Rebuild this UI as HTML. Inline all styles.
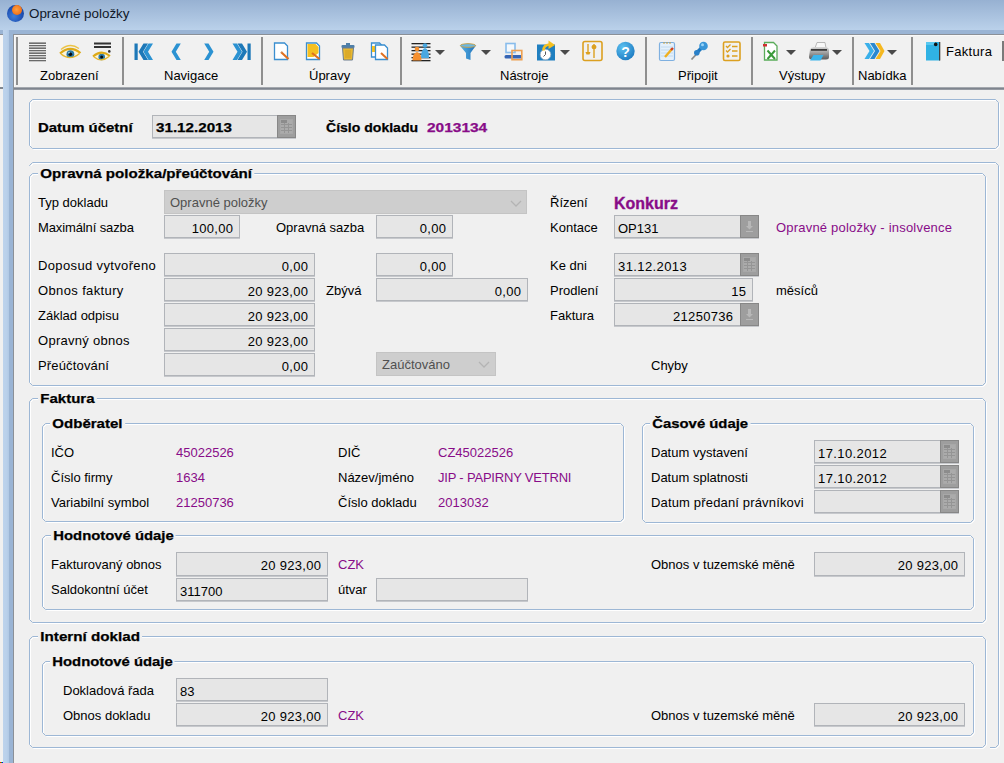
<!DOCTYPE html><html><head><meta charset="utf-8"><style>
*{box-sizing:content-box}
body{margin:0;width:1004px;height:763px;overflow:hidden;background:#f0f0f0;position:relative;font-family:"Liberation Sans",sans-serif;font-size:13px;color:#000}
div{position:absolute}
.t{white-space:nowrap;line-height:15px}
.b{font-weight:bold;transform-origin:0 0;-webkit-text-stroke:0.25px currentColor}
.p{color:#880c88}
.gb{border:1px solid #9cb6d6;border-radius:3px}
.gw{border:1px solid #ffffff;border-radius:3px}
.cap{white-space:nowrap;line-height:15px;font-weight:bold;transform-origin:0 0;-webkit-text-stroke:0.25px #000;background:#f0f0f0;padding:0 2px 0 2px}
.fld{border:1px solid #b1b4b9;background:#e6e6e6;box-shadow:0 1px 0 #c6c8cc}
.cmb{border:1px solid #c4c4c4;background:#cecece}
.btn{border:1px solid #878787;background:#9e9e9e}
.tb{white-space:nowrap;line-height:15px;color:#000}
</style></head><body>

<div style="left:0;top:0;width:1004px;height:30px;background:linear-gradient(#97b1d2,#bad1ea)"></div>
<div style="left:7px;top:5px;width:17px;height:17px;border-radius:50%;background:radial-gradient(circle at 40% 65%,#3f7fd8 0,#1e50b4 55%,#12398a 100%)"></div>
<div style="left:12px;top:5px;width:10px;height:10px;border-radius:50%;background:radial-gradient(circle at 45% 45%,#ffa040 0,#f06a10 80%)"></div>
<div class="t" style="left:29px;top:5.5px;color:#101828;font-size:13.4px">Opravné položky</div>
<div style="left:0;top:30px;width:1004px;height:4px;background:#9ab4d4"></div>
<div style="left:0;top:34px;width:3px;height:1px;background:#8b9097"></div>
<div style="left:0;top:35px;width:3px;height:52px;background:#f6f6f6"></div>
<div style="left:0;top:87px;width:3px;height:2px;background:#80868f"></div>
<div style="left:3px;top:30px;width:6px;height:733px;background:linear-gradient(90deg,#bdd3ec,#b9d0ea 60%,#b0c8e4)"></div>
<div style="left:9px;top:30px;width:4px;height:733px;background:#9ab4d4"></div>
<div style="left:13px;top:34px;width:1px;height:729px;background:#8b9097"></div>
<div style="left:13px;top:34px;width:991px;height:1px;background:#8b9097"></div>
<div style="left:14px;top:35px;width:990px;height:52px;background:#f1f1f1"></div>
<div style="left:14px;top:35px;width:990px;height:1px;background:#f9f9f9"></div>
<div style="left:14px;top:35px;width:1px;height:52px;background:#f9f9f9"></div>
<div style="left:14px;top:87px;width:990px;height:1px;background:#a4a8ae"></div>
<div style="left:14px;top:88px;width:990px;height:1px;background:#7e848e"></div>
<div style="left:14px;top:89px;width:990px;height:1px;background:#959aa2"></div>
<div style="left:0;top:762px;width:1px;height:1px;background:#f00"></div><div style="left:1px;top:762px;width:1px;height:1px;background:#0c0"></div><div style="left:2px;top:762px;width:1px;height:1px;background:#00f"></div>
<div style="left:16px;top:37px;width:2px;height:48px;background:#8f8f8f"></div>
<div style="left:122px;top:37px;width:2px;height:48px;background:#8f8f8f"></div>
<div style="left:261px;top:37px;width:2px;height:48px;background:#8f8f8f"></div>
<div style="left:400px;top:37px;width:2px;height:48px;background:#8f8f8f"></div>
<div style="left:645px;top:37px;width:2px;height:48px;background:#8f8f8f"></div>
<div style="left:751px;top:37px;width:2px;height:48px;background:#8f8f8f"></div>
<div style="left:852px;top:37px;width:2px;height:48px;background:#8f8f8f"></div>
<div style="left:911px;top:37px;width:2px;height:48px;background:#8f8f8f"></div>
<div style="left:1002px;top:41px;width:2px;height:20px;background:#7a7a7a"></div>
<div class="t " style="left:40px;top:67.5px;">Zobrazení</div>
<div class="t " style="left:164px;top:67.5px;">Navigace</div>
<div class="t " style="left:309px;top:67.5px;">Úpravy</div>
<div class="t " style="left:500px;top:67.5px;">Nástroje</div>
<div class="t " style="left:678px;top:67.5px;">Připojit</div>
<div class="t " style="left:779px;top:67.5px;">Výstupy</div>
<div class="t " style="left:858px;top:67.5px;">Nabídka</div>
<div class="t " style="left:946px;top:44px;letter-spacing:0.3px">Faktura</div>
<svg style="position:absolute;left:0;top:0" width="1004" height="70" viewBox="0 0 1004 70"><rect x="29" y="42.5" width="17" height="1.3" fill="#505050"/><rect x="29" y="45.0" width="17" height="1.3" fill="#6a6a6a"/><rect x="29" y="47.5" width="17" height="1.3" fill="#505050"/><rect x="29" y="50.0" width="17" height="1.3" fill="#6a6a6a"/><rect x="29" y="52.5" width="17" height="1.3" fill="#505050"/><rect x="29" y="55.0" width="17" height="1.3" fill="#6a6a6a"/><rect x="29" y="57.5" width="17" height="1.3" fill="#505050"/><rect x="29" y="60.0" width="17" height="1.3" fill="#6a6a6a"/><path d="M60.5 53.5 Q70 45 80 53 Q70 61 60.5 53.5z" fill="#fbf4dc"/><path d="M61 49.5 Q70 42 79 48.5" fill="none" stroke="#ecc448" stroke-width="1.3"/><circle cx="70.4" cy="54.2" r="3.9" fill="#2a7aa8"/><circle cx="70.4" cy="54.2" r="1.8" fill="#0a0a0a"/><circle cx="69" cy="52.8" r="0.8" fill="#bfe6f6"/><path d="M60 53.5 Q70 44.5 80.5 53" fill="none" stroke="#ddaa18" stroke-width="2.2"/><path d="M61 54 Q70 61.5 79.5 53.5" fill="none" stroke="#e6b830" stroke-width="1.4"/><rect x="94" y="42.5" width="17" height="2" fill="#333"/><rect x="94" y="46" width="17" height="2" fill="#333"/><circle cx="109.3" cy="51.4" r="1.3" fill="#333"/><path d="M93.5 56.5 Q101.5 49.5 109.5 56 Q101.5 62.5 93.5 56.5z" fill="#fbf4dc"/><circle cx="101.7" cy="57" r="3.3" fill="#2a7aa8"/><circle cx="101.7" cy="57" r="1.5" fill="#0a0a0a"/><path d="M93 56.5 Q101.5 49 110 56" fill="none" stroke="#ddaa18" stroke-width="2"/><path d="M94 57 Q101.5 63 109 56.5" fill="none" stroke="#e6b830" stroke-width="1.3"/><rect x="134.5" y="43.5" width="3.2" height="16.5" fill="#1d78b8"/><path d="M143.5 43.5h4.5l-5 8.3 5 8.2h-4.5l-5-8.2z" fill="#1d78b8"/><path d="M148.5 43.5h4.5l-5 8.3 5 8.2h-4.5l-5-8.2z" fill="#2b92d2"/><path d="M176.5 43.5h4.3l-5 8.3 5 8.2h-4.3l-5-8.2z" fill="#2b92d2"/><path d="M208.5 43.5h-4.3l5 8.3-5 8.2h4.3l5-8.2z" fill="#2b92d2"/><path d="M237 43.5h-4.5l5 8.3-5 8.2h4.5l5-8.2z" fill="#2b92d2"/><path d="M242 43.5h-4.5l5 8.3-5 8.2h4.5l5-8.2z" fill="#1d78b8"/><rect x="247.5" y="43.5" width="3.2" height="16.5" fill="#1d78b8"/><path d="M274.5 43.0h10l3 3v13.5h-13z" fill="#ffffff" stroke="#3a8ed0" stroke-width="1.3"/><path d="M281 52 L288.5 59" stroke="#e07020" stroke-width="2.2"/><path d="M281 52 l1.5 -0.5 l-0.5 1.5z" fill="#c0a080"/><path d="M306.5 43.0h10l3 3v13.5h-13z" fill="#ffffff" stroke="#3a8ed0" stroke-width="1.3"/><path d="M307.5 44h8l3 3v6l-5 4h-6z" fill="#f5c020"/><path d="M312 53 L319.5 59" stroke="#e07020" stroke-width="2.2"/><rect x="341.5" y="45" width="13" height="3" rx="1" fill="#4f7fa8"/><rect x="346" y="43" width="4" height="2" fill="#4f7fa8"/><path d="M342.5 48h11l-1 12h-9z" fill="#e8b830" stroke="#6f7f8f" stroke-width="1"/><path d="M346 50v8M348 50v8M350 50v8" stroke="#c89820" stroke-width="0.8"/><path d="M371.5 43.0h8l3 3v11h-11z" fill="#ffffff" stroke="#3a8ed0" stroke-width="1.3"/><rect x="372" y="46" width="3" height="6" fill="#f5c020"/><path d="M375.5 45.0h9l3 3v11.5h-12z" fill="#ffffff" stroke="#3a8ed0" stroke-width="1.3"/><path d="M381 53 L387.5 59" stroke="#e07020" stroke-width="2"/><rect x="411.5" y="43" width="19" height="1.3" fill="#222"/><rect x="411.5" y="46.5" width="19" height="1.3" fill="#222"/><rect x="411.5" y="50" width="19" height="1.3" fill="#222"/><rect x="411.5" y="53.5" width="19" height="1.3" fill="#222"/><rect x="411.5" y="57" width="19" height="1.3" fill="#222"/><rect x="411.5" y="60" width="19" height="1.3" fill="#222"/><circle cx="425" cy="45.5" r="2.3" fill="#4aa8e0"/><path d="M421 58 Q421 49 425 48 Q429 49 429 58z" fill="#4aa8e0"/><circle cx="417" cy="49" r="2.3" fill="#f59030"/><path d="M412.5 60.5 Q412.5 53 417 52 Q421.5 53 421.5 60.5z" fill="#f59030"/><path d="M435 50h10l-5 5z" fill="#4a4a4a"/><defs><linearGradient id="fg" x1="0" x2="1"><stop offset="0" stop-color="#5ab4e8"/><stop offset="1" stop-color="#1f70b8"/></linearGradient></defs><path d="M459.8 45.5 Q468 41.5 476 45.5 L470.5 53 V60 L466 58.5 V53z" fill="url(#fg)"/><ellipse cx="468" cy="45.5" rx="7.6" ry="1.8" fill="#6ab8e4" stroke="#d0a040" stroke-width="0.9"/><path d="M481 50h10l-5 5z" fill="#4a4a4a"/><rect x="506" y="43.5" width="9" height="9" fill="#f4f8fc" stroke="#88bcec" stroke-width="1.6"/><rect x="504.5" y="55" width="17.5" height="3.4" rx="1.5" fill="#3565b5"/><rect x="512" y="50.5" width="9.8" height="9.2" fill="none" stroke="#eea050" stroke-width="1.6"/><rect x="537" y="44.5" width="18" height="16" fill="#1f7fc0"/><circle cx="545.5" cy="54.5" r="5.3" fill="#ffffff" stroke="#8fa8bc" stroke-width="0.7"/><path d="M545.5 54.5v-3M545.5 54.5l-2 2" stroke="#444" stroke-width="0.9"/><path d="M543.5 50.5 Q543.5 45 549.5 44.5" fill="none" stroke="#f5c020" stroke-width="2.6"/><path d="M548.5 40.5 L555 45 L548.5 49z" fill="#f5c020"/><path d="M560 50h10l-5 5z" fill="#4a4a4a"/><rect x="583" y="41.5" width="19" height="19" rx="2" fill="none" stroke="#dca020" stroke-width="1.6"/><path d="M588 44v8M594 44v14" stroke="#dca020" stroke-width="1.4"/><path d="M585.5 52h5l-1 2.5h-3z" fill="#dca020"/><ellipse cx="594" cy="47" rx="2.5" ry="2.2" fill="#dca020"/><defs><radialGradient id="hg" cx="0.35" cy="0.3" r="0.8"><stop offset="0" stop-color="#5cc0f0"/><stop offset="1" stop-color="#1a78c0"/></radialGradient></defs><circle cx="625.5" cy="51" r="9.2" fill="url(#hg)"/><text x="625.5" y="57" font-family="Liberation Sans" font-weight="bold" font-size="14" fill="#fff" text-anchor="middle">?</text><rect x="659.5" y="42.5" width="15" height="18" rx="1.5" fill="#e4f0fb" stroke="#7fb0e0" stroke-width="1.2"/><path d="M661 47h12M661 50h12M661 53h12M661 56h12" stroke="#b8d4ee" stroke-width="0.8"/><path d="M664 44v-2M667 44v-2M670 44v-2" stroke="#c8a040" stroke-width="1"/><path d="M665 57 L672 49" stroke="#f0b020" stroke-width="2.4"/><path d="M671 50 L673 48" stroke="#d04020" stroke-width="2.4"/><path d="M691.5 59.5 L698 52.5" stroke="#8a8a8a" stroke-width="1.8"/><path d="M695.5 51.5 L703 44 L705.5 46.5 L698 54z" fill="#1f78c0"/><circle cx="703.5" cy="46" r="4.3" fill="#3a96d8"/><circle cx="696.8" cy="52.8" r="2.8" fill="#2a80c8"/><circle cx="702.5" cy="44.8" r="1.5" fill="#9ad4f8"/><rect x="723.5" y="42" width="16.5" height="18.5" rx="1.5" fill="none" stroke="#dca020" stroke-width="1.6"/><path d="M726 46l1.5 1.5 3-3M726 50.5l1.5 1.5 3-3" fill="none" stroke="#dca020" stroke-width="1.3"/><circle cx="728" cy="56" r="1.6" fill="#dca020"/><path d="M732 46.5h5.5M732 51h5.5M732 56h5.5" stroke="#dca020" stroke-width="1.6"/><path d="M764.5 42.5h9l3.5 3.5v14h-12.5z" fill="#ffffff" stroke="#5aac5a" stroke-width="1.3"/><path d="M767.5 50.5 L775 59M775 50.5 L767.5 59" stroke="#3a9a3a" stroke-width="2"/><rect x="763" y="44" width="4" height="2.5" fill="#d03030"/><path d="M786 50h10l-5 5z" fill="#4a4a4a"/><defs><linearGradient id="pg" x1="0" y1="0" x2="0" y2="1"><stop offset="0" stop-color="#d8d8d8"/><stop offset="0.5" stop-color="#9a9a9a"/><stop offset="1" stop-color="#5a5a5a"/></linearGradient></defs><path d="M815 48 L817 42.5 H825 L826 48z" fill="#f8f8f8" stroke="#a8a8a8" stroke-width="0.8"/><path d="M810 49.5 Q811 47 814 47 H825 Q828.5 47 829 50 V57 Q829 59.5 826 59.5 H812 Q809 59.5 809 57z" fill="url(#pg)"/><rect x="811" y="49" width="16" height="1.8" fill="#3a3a3a"/><path d="M813.5 55 H823.5 L820.5 60.5 H810z" fill="#3cb4ea"/><path d="M832 50h10l-5 5z" fill="#4a4a4a"/><path d="M864.5 43h4.5l5 8-5 8h-4.5l5-8z" fill="#3ab0ea"/><path d="M870 43h4.5l5 8-5 8h-4.5l5-8z" fill="#2a88d0"/><path d="M875.5 43h4.5l4.5 8-4.5 8h-4.5l5-8z" fill="#f5b820"/><path d="M887 50h10l-5 5z" fill="#4a4a4a"/><rect x="926" y="42" width="14" height="18.5" fill="#30b2e4"/><rect x="926" y="42" width="9" height="3" fill="#58c8f0"/><rect x="939" y="42" width="1.3" height="18.5" fill="#404040"/><circle cx="935.7" cy="44.4" r="1.8" fill="#111"/></svg>
<svg style="position:absolute;left:29px;top:99px" width="972" height="52"><path d="M4.5 1.5H967.5L970.5 4.5V47.5L967.5 50.5H4.5L1.5 47.5V4.5Z" fill="none" stroke="#ffffff" stroke-width="1"/><path d="M3.5 0.5H966.5L969.5 3.5V46.5L966.5 49.5H3.5L0.5 46.5V3.5Z" fill="none" stroke="#9db7d5" stroke-width="1"/></svg>
<div class="t b" style="left:38px;top:120px;transform:scaleX(1.148)">Datum účetní</div>
<div class="fld" style="left:152px;top:115px;width:142px;height:21px"></div>
<div class="btn" style="left:277px;top:115px;width:17px;height:21px"><svg width="17" height="21" viewBox="0 0 17 21" style="position:absolute;left:0;top:0"><rect x="2.5" y="3.5" width="12" height="14" fill="none" stroke="#a8a8a8" stroke-width="1"/><rect x="3" y="4" width="11" height="13" fill="#ababab"/><rect x="3" y="4" width="6" height="3" fill="#8c8c8c"/><g fill="#959595"><rect x="3" y="8" width="11" height="1"/><rect x="3" y="11" width="11" height="1"/><rect x="3" y="14" width="11" height="1"/><rect x="6" y="7" width="1" height="10"/><rect x="10" y="7" width="1" height="10"/></g></svg></div>
<div class="t b" style="left:156px;top:120px;transform:scaleX(1.168)">31.12.2013</div>
<div class="t b" style="left:326px;top:120px;transform:scaleX(1.08)">Číslo dokladu</div>
<div class="t b p" style="left:427px;top:120px;transform:scaleX(1.19)">2013134</div>
<svg style="position:absolute;left:29px;top:162px" width="972" height="588"><path d="M4.5 1.5H967.5L970.5 4.5V583.5L967.5 586.5H4.5L1.5 583.5V4.5Z" fill="none" stroke="#ffffff" stroke-width="1"/><path d="M3.5 0.5H966.5L969.5 3.5V582.5L966.5 585.5H3.5L0.5 582.5V3.5Z" fill="none" stroke="#9db7d5" stroke-width="1"/></svg>
<div style="left:28px;top:166px;width:4px;height:585px;background:#f0f0f0"></div>
<div style="left:28px;top:746px;width:962px;height:4px;background:#f0f0f0"></div>
<svg style="position:absolute;left:29px;top:173px" width="959" height="215"><path d="M4.5 1.5H954.5L957.5 4.5V210.5L954.5 213.5H4.5L1.5 210.5V4.5Z" fill="none" stroke="#ffffff" stroke-width="1"/><path d="M3.5 0.5H953.5L956.5 3.5V209.5L953.5 212.5H3.5L0.5 209.5V3.5Z" fill="none" stroke="#9db7d5" stroke-width="1"/></svg>
<div class="cap" style="left:38px;top:166px;transform:scaleX(1.163)">Opravná položka/přeúčtování</div>
<div class="t " style="left:38px;top:195px;">Typ dokladu</div>
<div class="cmb" style="left:164px;top:190px;width:361px;height:22px"></div>
<div class="t " style="left:170px;top:195px;color:#505050">Opravné položky</div>
<svg style="position:absolute;left:509px;top:198.5px" width="14" height="9"><path d="M2 2l5 5 5-5" fill="none" stroke="#b4b4b4" stroke-width="1.3"/></svg>
<div class="t " style="left:38px;top:220px;letter-spacing:-0.12px">Maximální sazba</div>
<div class="fld" style="left:164px;top:215px;width:74px;height:21px"></div>
<div class="t " style="right:770.7px;top:220.5px;letter-spacing:0.3px">100,00</div>
<div class="t " style="left:276px;top:220px;">Opravná sazba</div>
<div class="fld" style="left:376px;top:215px;width:75px;height:21px"></div>
<div class="t " style="right:557.7px;top:220.5px;letter-spacing:0.3px">0,00</div>
<div class="t " style="left:38px;top:258px;letter-spacing:0.36px">Doposud vytvořeno</div>
<div class="fld" style="left:164px;top:253px;width:149px;height:21px"></div>
<div class="t " style="right:695.7px;top:258.5px;letter-spacing:0.3px">0,00</div>
<div class="fld" style="left:376px;top:253px;width:75px;height:21px"></div>
<div class="t " style="right:557.7px;top:258.5px;letter-spacing:0.3px">0,00</div>
<div class="t " style="left:38px;top:283px;letter-spacing:0.37px">Obnos faktury</div>
<div class="fld" style="left:164px;top:278px;width:149px;height:21px"></div>
<div class="t " style="right:695.7px;top:283.5px;letter-spacing:0.3px">20 923,00</div>
<div class="t " style="left:326px;top:283px;">Zbývá</div>
<div class="fld" style="left:376px;top:278px;width:150px;height:21px"></div>
<div class="t " style="right:482.70000000000005px;top:283.5px;letter-spacing:0.3px">0,00</div>
<div class="t " style="left:38px;top:308px;">Základ odpisu</div>
<div class="fld" style="left:164px;top:303px;width:149px;height:21px"></div>
<div class="t " style="right:695.7px;top:308.5px;letter-spacing:0.3px">20 923,00</div>
<div class="t " style="left:38px;top:333px;letter-spacing:0.27px">Opravný obnos</div>
<div class="fld" style="left:164px;top:328px;width:149px;height:21px"></div>
<div class="t " style="right:695.7px;top:333.5px;letter-spacing:0.3px">20 923,00</div>
<div class="t " style="left:38px;top:358px;letter-spacing:0.16px">Přeúčtování</div>
<div class="fld" style="left:164px;top:353px;width:149px;height:21px"></div>
<div class="t " style="right:695.7px;top:358.5px;letter-spacing:0.3px">0,00</div>
<div class="cmb" style="left:376px;top:352px;width:118px;height:22px"></div>
<div class="t " style="left:382px;top:357px;color:#505050">Zaúčtováno</div>
<svg style="position:absolute;left:477px;top:360px" width="14" height="9"><path d="M2 2l5 5 5-5" fill="none" stroke="#b4b4b4" stroke-width="1.3"/></svg>
<div class="t " style="left:550px;top:195px;">Řízení</div>
<div class="t p" style="left:614px;top:194.5px;font-weight:bold;font-size:16px;line-height:18px;-webkit-text-stroke:0.35px #880c88">Konkurz</div>
<div class="t " style="left:550px;top:220px;">Kontace</div>
<div class="fld" style="left:614px;top:215px;width:143px;height:21px"></div>
<div class="btn" style="left:740px;top:215px;width:17px;height:21px"><svg width="17" height="21" viewBox="0 0 17 21" style="position:absolute;left:0;top:0"><rect x="7" y="5" width="3" height="5" fill="#b8b8b8"/><path d="M5 10h7l-3.5 3.5z" fill="#b8b8b8"/><rect x="5" y="15" width="7" height="1" fill="#b8b8b8"/></svg></div>
<div class="t " style="left:618px;top:220.5px;">OP131</div>
<div class="t p" style="left:776px;top:220px;letter-spacing:0.2px">Opravné položky - insolvence</div>
<div class="t " style="left:550px;top:258px;">Ke dni</div>
<div class="fld" style="left:614px;top:253px;width:143px;height:21px"></div>
<div class="btn" style="left:740px;top:253px;width:17px;height:21px"><svg width="17" height="21" viewBox="0 0 17 21" style="position:absolute;left:0;top:0"><rect x="2.5" y="3.5" width="12" height="14" fill="none" stroke="#a8a8a8" stroke-width="1"/><rect x="3" y="4" width="11" height="13" fill="#ababab"/><rect x="3" y="4" width="6" height="3" fill="#8c8c8c"/><g fill="#959595"><rect x="3" y="8" width="11" height="1"/><rect x="3" y="11" width="11" height="1"/><rect x="3" y="14" width="11" height="1"/><rect x="6" y="7" width="1" height="10"/><rect x="10" y="7" width="1" height="10"/></g></svg></div>
<div class="t " style="left:618px;top:258.5px;letter-spacing:0.4px">31.12.2013</div>
<div class="t " style="left:550px;top:283px;">Prodlení</div>
<div class="fld" style="left:614px;top:278px;width:137px;height:21px"></div>
<div class="t " style="right:257.70000000000005px;top:283.5px;letter-spacing:0.3px">15</div>
<div class="t " style="left:776px;top:283px;">měsíců</div>
<div class="t " style="left:550px;top:308px;">Faktura</div>
<div class="fld" style="left:614px;top:303px;width:143px;height:21px"></div>
<div class="btn" style="left:740px;top:303px;width:17px;height:21px"><svg width="17" height="21" viewBox="0 0 17 21" style="position:absolute;left:0;top:0"><rect x="7" y="5" width="3" height="5" fill="#b8b8b8"/><path d="M5 10h7l-3.5 3.5z" fill="#b8b8b8"/><rect x="5" y="15" width="7" height="1" fill="#b8b8b8"/></svg></div>
<div class="t " style="right:270.70000000000005px;top:308.5px;letter-spacing:0.3px">21250736</div>
<div class="t " style="left:651px;top:358px;">Chyby</div>
<svg style="position:absolute;left:29px;top:398px" width="959" height="227"><path d="M4.5 1.5H954.5L957.5 4.5V222.5L954.5 225.5H4.5L1.5 222.5V4.5Z" fill="none" stroke="#ffffff" stroke-width="1"/><path d="M3.5 0.5H953.5L956.5 3.5V221.5L953.5 224.5H3.5L0.5 221.5V3.5Z" fill="none" stroke="#9db7d5" stroke-width="1"/></svg>
<div class="cap" style="left:38px;top:391px;transform:scaleX(1.154)">Faktura</div>
<svg style="position:absolute;left:42px;top:423px" width="584" height="101"><path d="M4.5 1.5H579.5L582.5 4.5V96.5L579.5 99.5H4.5L1.5 96.5V4.5Z" fill="none" stroke="#ffffff" stroke-width="1"/><path d="M3.5 0.5H578.5L581.5 3.5V95.5L578.5 98.5H3.5L0.5 95.5V3.5Z" fill="none" stroke="#9db7d5" stroke-width="1"/></svg>
<div class="cap" style="left:50px;top:416px;transform:scaleX(1.157)">Odběratel</div>
<div class="t " style="left:51px;top:445px;">IČO</div>
<div class="t p" style="left:176px;top:445px;">45022526</div>
<div class="t " style="left:51px;top:470px;">Číslo firmy</div>
<div class="t p" style="left:176px;top:470px;">1634</div>
<div class="t " style="left:51px;top:495px;">Variabilní symbol</div>
<div class="t p" style="left:176px;top:495px;">21250736</div>
<div class="t " style="left:338px;top:445px;">DIČ</div>
<div class="t p" style="left:438px;top:445px;">CZ45022526</div>
<div class="t " style="left:338px;top:470px;">Název/jméno</div>
<div class="t p" style="left:438px;top:470px;letter-spacing:-0.2px">JIP - PAPIRNY VETRNI</div>
<div class="t " style="left:338px;top:495px;">Číslo dokladu</div>
<div class="t p" style="left:438px;top:495px;">2013032</div>
<svg style="position:absolute;left:642px;top:423px" width="334" height="102"><path d="M4.5 1.5H329.5L332.5 4.5V97.5L329.5 100.5H4.5L1.5 97.5V4.5Z" fill="none" stroke="#ffffff" stroke-width="1"/><path d="M3.5 0.5H328.5L331.5 3.5V96.5L328.5 99.5H3.5L0.5 96.5V3.5Z" fill="none" stroke="#9db7d5" stroke-width="1"/></svg>
<div class="cap" style="left:650px;top:416px;transform:scaleX(1.143)">Časové údaje</div>
<div class="t " style="left:651px;top:445px;">Datum vystavení</div>
<div class="fld" style="left:814px;top:440px;width:143px;height:21px"></div>
<div class="btn" style="left:940px;top:440px;width:17px;height:21px"><svg width="17" height="21" viewBox="0 0 17 21" style="position:absolute;left:0;top:0"><rect x="2.5" y="3.5" width="12" height="14" fill="none" stroke="#a8a8a8" stroke-width="1"/><rect x="3" y="4" width="11" height="13" fill="#ababab"/><rect x="3" y="4" width="6" height="3" fill="#8c8c8c"/><g fill="#959595"><rect x="3" y="8" width="11" height="1"/><rect x="3" y="11" width="11" height="1"/><rect x="3" y="14" width="11" height="1"/><rect x="6" y="7" width="1" height="10"/><rect x="10" y="7" width="1" height="10"/></g></svg></div>
<div class="t " style="left:818px;top:445.5px;letter-spacing:0.4px">17.10.2012</div>
<div class="t " style="left:651px;top:470px;">Datum splatnosti</div>
<div class="fld" style="left:814px;top:465px;width:143px;height:21px"></div>
<div class="btn" style="left:940px;top:465px;width:17px;height:21px"><svg width="17" height="21" viewBox="0 0 17 21" style="position:absolute;left:0;top:0"><rect x="2.5" y="3.5" width="12" height="14" fill="none" stroke="#a8a8a8" stroke-width="1"/><rect x="3" y="4" width="11" height="13" fill="#ababab"/><rect x="3" y="4" width="6" height="3" fill="#8c8c8c"/><g fill="#959595"><rect x="3" y="8" width="11" height="1"/><rect x="3" y="11" width="11" height="1"/><rect x="3" y="14" width="11" height="1"/><rect x="6" y="7" width="1" height="10"/><rect x="10" y="7" width="1" height="10"/></g></svg></div>
<div class="t " style="left:818px;top:470.5px;letter-spacing:0.4px">17.10.2012</div>
<div class="t " style="left:651px;top:495px;letter-spacing:0.16px">Datum předaní právníkovi</div>
<div class="fld" style="left:814px;top:490px;width:143px;height:21px"></div>
<div class="btn" style="left:940px;top:490px;width:17px;height:21px"><svg width="17" height="21" viewBox="0 0 17 21" style="position:absolute;left:0;top:0"><rect x="2.5" y="3.5" width="12" height="14" fill="none" stroke="#a8a8a8" stroke-width="1"/><rect x="3" y="4" width="11" height="13" fill="#ababab"/><rect x="3" y="4" width="6" height="3" fill="#8c8c8c"/><g fill="#959595"><rect x="3" y="8" width="11" height="1"/><rect x="3" y="11" width="11" height="1"/><rect x="3" y="14" width="11" height="1"/><rect x="6" y="7" width="1" height="10"/><rect x="10" y="7" width="1" height="10"/></g></svg></div>
<svg style="position:absolute;left:42px;top:535px" width="934" height="77"><path d="M4.5 1.5H929.5L932.5 4.5V72.5L929.5 75.5H4.5L1.5 72.5V4.5Z" fill="none" stroke="#ffffff" stroke-width="1"/><path d="M3.5 0.5H928.5L931.5 3.5V71.5L928.5 74.5H3.5L0.5 71.5V3.5Z" fill="none" stroke="#9db7d5" stroke-width="1"/></svg>
<div class="cap" style="left:51px;top:528px;transform:scaleX(1.142)">Hodnotové údaje</div>
<div class="t " style="left:51px;top:557px;">Fakturovaný obnos</div>
<div class="fld" style="left:176px;top:552px;width:150px;height:22px"></div>
<div class="t " style="right:682.7px;top:557.5px;letter-spacing:0.3px">20 923,00</div>
<div class="t p" style="left:338px;top:557px;">CZK</div>
<div class="t " style="left:51px;top:582px;">Saldokontní účet</div>
<div class="fld" style="left:176px;top:578px;width:150px;height:21px"></div>
<div class="t " style="left:180px;top:583.5px;">311700</div>
<div class="t " style="left:338px;top:582px;">útvar</div>
<div class="fld" style="left:376px;top:578px;width:150px;height:21px"></div>
<div class="t " style="left:651px;top:557px;">Obnos v tuzemské měně</div>
<div class="fld" style="left:814px;top:552px;width:149px;height:22px"></div>
<div class="t " style="right:45.700000000000045px;top:557.5px;letter-spacing:0.3px">20 923,00</div>
<svg style="position:absolute;left:29px;top:636px" width="959" height="114"><path d="M4.5 1.5H954.5L957.5 4.5V109.5L954.5 112.5H4.5L1.5 109.5V4.5Z" fill="none" stroke="#ffffff" stroke-width="1"/><path d="M3.5 0.5H953.5L956.5 3.5V108.5L953.5 111.5H3.5L0.5 108.5V3.5Z" fill="none" stroke="#9db7d5" stroke-width="1"/></svg>
<div class="cap" style="left:38px;top:629px;transform:scaleX(1.169)">Interní doklad</div>
<svg style="position:absolute;left:42px;top:661px" width="934" height="77"><path d="M4.5 1.5H929.5L932.5 4.5V72.5L929.5 75.5H4.5L1.5 72.5V4.5Z" fill="none" stroke="#ffffff" stroke-width="1"/><path d="M3.5 0.5H928.5L931.5 3.5V71.5L928.5 74.5H3.5L0.5 71.5V3.5Z" fill="none" stroke="#9db7d5" stroke-width="1"/></svg>
<div class="cap" style="left:50px;top:654px;transform:scaleX(1.142)">Hodnotové údaje</div>
<div class="t " style="left:63px;top:683px;">Dokladová řada</div>
<div class="fld" style="left:176px;top:678px;width:150px;height:21px"></div>
<div class="t " style="left:180px;top:683.5px;">83</div>
<div class="t " style="left:63px;top:708px;">Obnos dokladu</div>
<div class="fld" style="left:176px;top:703px;width:150px;height:21px"></div>
<div class="t " style="right:682.7px;top:708.5px;letter-spacing:0.3px">20 923,00</div>
<div class="t p" style="left:338px;top:708px;">CZK</div>
<div class="t " style="left:651px;top:708px;">Obnos v tuzemské měně</div>
<div class="fld" style="left:814px;top:703px;width:149px;height:21px"></div>
<div class="t " style="right:45.700000000000045px;top:708.5px;letter-spacing:0.3px">20 923,00</div>
</body></html>
